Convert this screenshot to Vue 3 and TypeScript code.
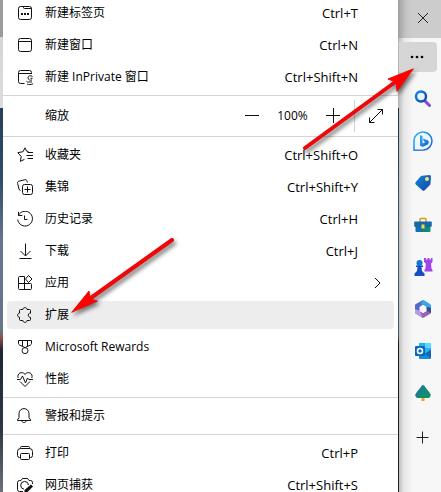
<script setup lang="ts">
interface MenuItem {
  label: string
  icon: string[]
  solid?: string[]
  keys?: string
  submenu?: boolean
  active?: boolean
}

const windowItems: MenuItem[] = [
  {
    label: '新建标签页',
    keys: 'Ctrl+T',
    icon: ['M3.5 1.5h9a2 2 0 0 1 2 2v9a2 2 0 0 1-2 2h-9a2 2 0 0 1-2-2v-9a2 2 0 0 1 2-2z', 'M6.5 1.5v1a1 1 0 0 0 1 1h7'],
    solid: ['M4 8h2v2H4z', 'M7 8h2v2H7z', 'M10 8h2v2h-2z'],
  },
  {
    label: '新建窗口',
    keys: 'Ctrl+N',
    icon: ['M3.5 1.5h9a2 2 0 0 1 2 2v9a2 2 0 0 1-2 2h-9a2 2 0 0 1-2-2v-9a2 2 0 0 1 2-2z', 'M1.5 4.5h13'],
  },
  {
    label: '新建 InPrivate 窗口',
    keys: 'Ctrl+Shift+N',
    icon: [
      'M7.5 14.5h-4a2 2 0 0 1-2-2v-9a2 2 0 0 1 2-2h9a2 2 0 0 1 2 2v1.5',
      'M1.5 4.5h13',
      'M15.5 7.5c-2-1.5-4.500-.8-4.500 1.300 0 2 2 2.700 4 2.200',
      'M13.5 9.300h2',
      'M9.500 12.500c1 1.200 3 .2 5.500 .5M10 15c1.500 1 4 .8 6.500-.5',
    ],
  },
]

const browseItems: MenuItem[] = [
  {
    label: '收藏夹',
    keys: 'Ctrl+Shift+O',
    icon: ['M11.5 4.500 9.700 4.200 8 .8 6.100 4.700 .8 5.700l3.400 3.700-.8 5 4.100-2.100', 'M10.500 5.500H16M9.500 8.500H16M10.500 11.500H16'],
  },
  {
    label: '集锦',
    keys: 'Ctrl+Shift+Y',
    icon: [
      'M3.500 11.500c-.8-.1-1.200-.6-1.500-1.500L.6 4.400c-.3-1.200.2-1.900 1.300-2.200L8 .7c1-.2 1.700.2 2 1.200l.4 1.500',
      'M7.500 5.500h6a2 2 0 0 1 2 2v6a2 2 0 0 1-2 2h-6a2 2 0 0 1-2-2v-6a2 2 0 0 1 2-2z',
      'M10.500 7.500v6M7.500 10.500h6',
    ],
  },
  {
    label: '历史记录',
    keys: 'Ctrl+H',
    icon: ['M1.500 4.200A7.400 7.400 0 1 1 .7 8.500', 'M1.500 .8v3.700h3.800', 'M7.500 4.500v4h3'],
  },
  { label: '下载', keys: 'Ctrl+J', icon: ['M8.500 .5v12M3.500 8l5 5 5-5', 'M2.500 15.500h12'] },
  {
    label: '应用',
    submenu: true,
    icon: [
      'M7.500 1.500h-5a1 1 0 0 0-1 1v11a1 1 0 0 0 1 1h11a1 1 0 0 0 1-1v-4a1 1 0 0 0-1-1h-12',
      'M7.500 1.500v13',
      'M11.500 .5 15 4 11.500 7.500 8.500 4z',
    ],
  },
  {
    label: '扩展',
    active: true,
    icon: [
      'M3.500 2.500h2.400c-.1-2.500 4.200-2.500 4.100 0h2.500a1 1 0 0 1 1 1v2.700c-3-.3-3 4.400 0 4.100v2.200a1 1 0 0 1-1 1H10c.1 2.500-4.200 2.500-4.100 0H3.500a1 1 0 0 1-1-1v-2.300c-2.500.1-2.500-4.100 0-4V3.500a1 1 0 0 1 1-1z',
    ],
  },
  {
    label: 'Microsoft Rewards',
    icon: ['M1.500 1.500h13v2.800c0 .8-.3 1.300-1 1.700L8 8.600 2.500 6c-.7-.4-1-.9-1-1.700z', 'M5.500 1.500v5.500M10.500 1.500v5.500', 'M8 8.600a3 3 0 1 1 0 6 3 3 0 1 1 0-6z'],
  },
  {
    label: '性能',
    icon: ['M1.200 7C-.5 2.500 5-.5 8 3.400 11 -.5 16.500 2.500 14.800 7', 'M3 10.500l5 5 5-5', 'M0 8.500h3.500L5.500 5l3 7 2-5 1.200 1.500H16'],
  },
]

const alertItems: MenuItem[] = [
  {
    label: '警报和提示',
    icon: ['M7 .6a5 5 0 0 1 5 5v4l1.700 2.400v.5H.4V12L2 9.600v-4a5 5 0 0 1 5-5z', 'M5 12.800c0 2.400 4 2.400 4 0'],
  },
]

const toolItems: MenuItem[] = [
  {
    label: '打印',
    keys: 'Ctrl+P',
    icon: [
      'M3.500 12.500h-1a2 2 0 0 1-2-2v-4a3 3 0 0 1 3-3h9a3 3 0 0 1 3 3v4a2 2 0 0 1-2 2h-1',
      'M3.500 3.500v-1a1 1 0 0 1 1-1h7a1 1 0 0 1 1 1v1',
      'M4.500 8.500h7a1 1 0 0 1 1 1v4a1 1 0 0 1-1 1h-7a1 1 0 0 1-1-1v-4a1 1 0 0 1 1-1z',
    ],
  },
  {
    label: '网页捕获',
    keys: 'Ctrl+Shift+S',
    icon: ['M6 14.500H2.500a2 2 0 0 1-2-2v-7a2 2 0 0 1 2-2H4l1.500-2h5l1.500 2h1.500a2 2 0 0 1 2 2V7', 'M7 12.200A3.900 3.900 0 1 1 11.500 8'],
    solid: ['M14 7.500 16 9.500 10 15.500H7.500V13z'],
  },
]

const groups: MenuItem[][] = [browseItems, alertItems, toolItems]
</script>

<template>
  <main class="screen">
    <div class="backdrop"></div>
    <nav class="menu" aria-label="设置及其他">
      <section class="group first">
        <button v-for="item in windowItems" :key="item.label" type="button" class="row">
          <svg class="icon" viewBox="0 0 16 16" aria-hidden="true">
            <path v-for="d in item.icon" :key="d" :d="d" />
            <path v-for="d in item.solid" :key="d" :d="d" class="solid" />
          </svg>
          <span class="label">{{ item.label }}</span>
          <span class="keys">{{ item.keys }}</span>
        </button>
      </section>

      <section class="zoom">
        <span class="zoom-label">缩放</span>
        <button type="button" class="zoom-button" aria-label="缩小">
          <svg class="icon" viewBox="0 0 16 16"><path d="M1 7.500h14" /></svg>
        </button>
        <output class="zoom-value">100%</output>
        <button type="button" class="zoom-button" aria-label="放大">
          <svg class="icon" viewBox="0 0 16 16"><path d="M1 7.500h14M8.500 0v15" /></svg>
        </button>
        <button type="button" class="full" aria-label="全屏">
          <svg class="icon" viewBox="0 0 16 16"><path d="M9.500 1.500h5v5M14.500 1.500l-13 13M1.500 9.500v5h5" /></svg>
        </button>
      </section>

      <section v-for="(group, index) in groups" :key="index" class="group">
        <button v-for="item in group" :key="item.label" type="button" class="row" :class="{ active: item.active }">
          <svg class="icon" viewBox="0 0 16 16" aria-hidden="true">
            <path v-for="d in item.icon" :key="d" :d="d" />
            <path v-for="d in item.solid" :key="d" :d="d" class="solid" />
          </svg>
          <span class="label">{{ item.label }}</span>
          <svg v-if="item.submenu" class="icon chevron" viewBox="0 0 16 16" aria-hidden="true">
            <path d="M6 3 11 8 6 13" />
          </svg>
          <span v-else class="keys">{{ item.keys }}</span>
        </button>
      </section>
    </nav>

    <aside class="side">
      <header class="caption">
        <button type="button" class="tool" aria-label="关闭">
          <svg class="glyph" viewBox="0 0 20 20"><path class="line" d="M5 4l10 10M15 4 5 14" /></svg>
        </button>
      </header>
      <div class="tools">
        <button type="button" class="tool more" aria-label="设置及其他">
          <svg class="glyph" viewBox="0 0 20 20">
            <circle cx="4" cy="10" r="1.300" /><circle cx="9" cy="10" r="1.300" /><circle cx="14" cy="10" r="1.300" />
          </svg>
        </button>
        <button type="button" class="tool" aria-label="搜索">
          <svg class="glyph" viewBox="0 0 20 20">
            <defs>
              <linearGradient id="lens" x2="1" y2="1"><stop stop-color="#1686e8" /><stop offset="1" stop-color="#1442a8" /></linearGradient>
            </defs>
            <path d="M12 12l4.500 4.500" stroke="#8548df" stroke-width="3" stroke-linecap="round" />
            <circle cx="8" cy="7.500" r="5" fill="#e6f4fc" stroke="url(#lens)" stroke-width="2.500" />
          </svg>
        </button>
        <button type="button" class="tool" aria-label="必应">
          <svg class="glyph" viewBox="0 0 20 20">
            <defs>
              <linearGradient id="bing" x2="1" y2="1"><stop stop-color="#2bb5ee" /><stop offset="1" stop-color="#1758d4" /></linearGradient>
            </defs>
            <path d="M1 19.200V9.500a9 9 0 1 1 9.500 9.500z" fill="#eef8fd" stroke="url(#bing)" stroke-width="1.500" />
            <path d="M7 4l2.500 1v7.500l3-1.500-1.800-.8L10 7.500l5 2c1.200 1.200 1 3-.3 4L9.500 16 7 14.500z" fill="url(#bing)" />
          </svg>
        </button>
        <button type="button" class="tool" aria-label="购物">
          <svg class="glyph" viewBox="0 0 20 20">
            <defs>
              <linearGradient id="tag" x2="1" y2="1"><stop stop-color="#1385dc" /><stop offset="1" stop-color="#1547a5" /></linearGradient>
            </defs>
            <path d="M9 2.800 16.500 2q1.500 0 1.500 1.500l-.5 7q-.1 1-.8 1.700l-5 5q-1.200 1-2.400 0l-6.500-5.800q-1.200-1.200 0-2.500L7.500 3.500q.6-.6 1.500-.7z" fill="url(#tag)" />
            <circle cx="14" cy="6" r="2" fill="#ffe06a" />
          </svg>
        </button>
        <button type="button" class="tool" aria-label="工具">
          <svg class="glyph" viewBox="0 0 20 20">
            <defs>
              <linearGradient id="case" x2="1"><stop stop-color="#1468c8" /><stop offset="1" stop-color="#109458" /></linearGradient>
            </defs>
            <path d="M7 7V4.500q0-1 1-1h4q1 0 1 1V7" fill="none" stroke="#d99a12" stroke-width="1.500" />
            <path d="M2.500 11h15v5q0 1-1 1h-13q-1 0-1-1z" fill="url(#case)" />
            <path d="M2 6.500h16q.8 0 .8 1v3q0 1.500-1.500 1.500H2.700q-1.500 0-1.500-1.500v-3q0-1 .8-1z" fill="#136aab" />
            <path d="M8.500 9.500h3v4h-3z" fill="#ffd43c" />
          </svg>
        </button>
        <button type="button" class="tool" aria-label="游戏">
          <svg class="glyph" viewBox="0 0 20 20">
            <path d="M11 1h2v1.500h1.500V1h2v1.500H18V1h1.500v4L18 6.500l.5 5 1 1.500v1.500h-8v-1.500l1-1.500.3-5L11 5z" fill="#a345e6" />
            <circle cx="6.500" cy="6" r="3" fill="#1476d3" />
            <path d="M3 8.500h7v1.500H8.500l.5 4 2.500 2.500V19H1.500v-2.500L4 14l.5-4H3z" fill="#174fc0" />
          </svg>
        </button>
        <button type="button" class="tool" aria-label="Microsoft 365">
          <svg class="glyph" viewBox="0 0 20 20">
            <path d="M10 1 2.500 5.200Q2 5.500 2 6.300v7q0 1 .8 1.500L7 12V8l6-4.500z" fill="#5369cc" />
            <path d="M10 1q.7 0 1.500.5L17.200 5q.8.500.8 1.500v7L13.500 11V8L8 5z" fill="#39aae4" />
            <path d="M18 9v4.500q0 .8-.8 1.300L11 18.600q-1 .6-2 0l-6.200-3.800L7 12l3 2z" fill="#9563b8" />
            <path d="M2 10v3.300q0 1 .8 1.500L9 18.600 7 12z" fill="#b99ce6" />
            <path d="M13 7.500v4L18 14V9z" fill="#374e91" />
            <path d="M10 6l3.500 2v4L10 14l-3.500-2V8z" fill="#f7f7f7" />
          </svg>
        </button>
        <button type="button" class="tool" aria-label="Outlook">
          <svg class="glyph" viewBox="0 0 20 20">
            <path d="M6 2h12v10H6z" fill="#28b5ed" /><path d="M12 2h6v5h-6z" fill="#57d8ff" />
            <path d="M6 9l7 3 5-4v9q0 1-1 1H7q-1 0-1-1z" fill="#178bd8" />
            <path d="M18 9v8l-6-4z" fill="#1265ad" />
            <rect x="2" y="5" width="10" height="10" rx="1" fill="#0768bd" />
            <circle cx="7" cy="10" r="2.500" fill="none" stroke="#fff" stroke-width="1.600" />
          </svg>
        </button>
        <button type="button" class="tool" aria-label="Drop">
          <svg class="glyph" viewBox="0 0 20 20">
            <defs>
              <linearGradient id="tree" x2="1" y2="1"><stop stop-color="#1c75a0" /><stop offset="1" stop-color="#12955a" /></linearGradient>
            </defs>
            <path d="M8.500 14h3v4h-3z" fill="#eda420" />
            <path d="M10 2q1.500 0 2.500 2.500L15 7.500q.5 1 1.500 2 2 2.200.8 4-.6 1.500-2.300 1.500H5q-1.700 0-2.300-1.500-1.200-1.800.8-4 1-1 1.500-2l2.500-3Q8.500 2 10 2z" fill="url(#tree)" />
          </svg>
        </button>
        <button type="button" class="tool add" aria-label="自定义">
          <svg class="glyph" viewBox="0 0 20 20"><path class="line" d="M3.500 10.500h12M9.500 4.500v12" /></svg>
        </button>
      </div>
    </aside>

    <svg class="arrows" width="441" height="492" aria-hidden="true">
      <g class="arrow">
        <path d="M305 148 398 80" />
        <path class="head" d="M413 69 388 79 396 82 397 91z" />
      </g>
      <g class="arrow">
        <path d="M172 240 88 300" />
        <path class="head" d="M72 312 89 291 90 299 97 301z" />
      </g>
    </svg>
  </main>
</template>

<style>
body {
  margin: 0;
}
</style>

<style scoped>
.screen {
  position: relative;
  display: grid;
  grid-template-columns: 3px 1fr 43px;
  height: 100vh;
  overflow: hidden;
  color: #000;
  background: #fff;
  font: 12px/16px 'Open Sans', 'Noto Sans CJK SC', sans-serif;
}

.backdrop {
  background: linear-gradient(#9b9b9b 37px, #d5d5d5 37px, #dcdcdc 108px, #263f5b 108px, #314d6b 180px, #65758c 240px, #65758c 330px, #8c5149 338px, #1e2633 350px, #303943 430px, #777a80);
}

.menu {
  min-width: 0;
}

button {
  padding: 0;
  border: 0;
  background: none;
  color: inherit;
  font: inherit;
}

.group {
  display: grid;
  gap: 4px;
  padding: 4px;
  border-top: 1px solid #d4d4d4;
}

.group.first {
  margin-top: -1px;
  padding-top: 0;
  border-top: 0;
}

.row {
  display: flex;
  align-items: center;
  height: 28px;
  padding: 0 36px 0 10px;
  border-radius: 4px;
  text-align: left;
}

.row.active {
  background: #ededed;
}

.icon {
  flex: none;
  width: 16px;
  height: 16px;
  fill: none;
  stroke: #111;
  stroke-width: 1;
}

.solid {
  fill: #111;
  stroke: none;
}

.label {
  flex: 1;
  margin-left: 12px;
}

.keys {
  font-size: 13px;
}

.chevron {
  margin-right: -27px;
}

.zoom {
  display: flex;
  align-items: center;
  height: 40px;
  padding: 0 14px 0 42px;
  border-top: 1px solid #d4d4d4;
}

.zoom-label {
  flex: 1;
}

.zoom-button {
  display: grid;
  width: 16px;
}

.zoom-value {
  width: 65px;
  text-align: center;
}

.full {
  display: grid;
  justify-content: end;
  align-items: center;
  width: 30px;
  height: 32px;
  margin-left: 13px;
  border-left: 1px solid #d4d4d4;
}

.side {
  display: flex;
  flex-direction: column;
  background:
    linear-gradient(#8d8d8d 38px, #b5b5b5 38px, #b5b5b5 108px, #1b3348 108px, #46566a 250px, #46566a 335px, #15171b 345px, #222) 0 0 / 1px 100% no-repeat,
    linear-gradient(90deg, #0004, #00000010 6px, #0000 16px),
    #f7f7f7;
}

.caption {
  display: grid;
  justify-content: end;
  height: 38px;
  background: linear-gradient(90deg, #a0a0a0, #c4c4c4 8px, #cccccc 14px);
}

.tools {
  display: grid;
  grid-auto-rows: 30px;
  gap: 12px;
  padding-top: 4px;
}

.tool {
  display: grid;
  place-items: center;
  width: 36px;
}

.tools .tool {
  width: 38px;
  padding-left: 10px;
  margin-left: 1px;
}

.tools .more {
  padding-left: 0;
  border-radius: 0 4px 4px 0;
  background: #d6d6d6;
}

.tools .add {
  margin-top: 3px;
}

.glyph {
  width: 20px;
  height: 20px;
}

.line {
  fill: none;
  stroke: #222;
  stroke-width: 1;
}

.arrows {
  position: absolute;
  top: 0;
  left: 0;
  pointer-events: none;
}

.arrow {
  fill: none;
  stroke: #ed0909;
  stroke-width: 4;
  stroke-linecap: round;
  filter: drop-shadow(2px 3px 2px #0008);
}

.head {
  fill: #f00;
  stroke-width: 1;
}
</style>
